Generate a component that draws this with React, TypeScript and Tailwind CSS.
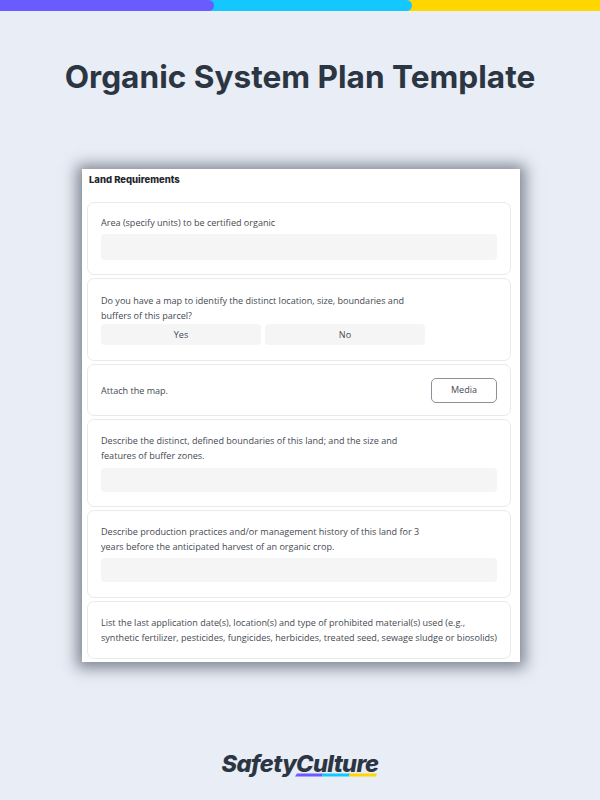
const Label = ({ children }: { children: React.ReactNode }) => (
  <p className="text-[9.05px] leading-[15px] text-[#454a52]">{children}</p>
);

const Field = ({ className }: { className: string }) => (
  <div className={`rounded-[4px] bg-[#f5f5f6] ${className}`} />
);

const Card = ({ className, children }: { className: string; children: React.ReactNode }) => (
  <section className={`rounded-[7px] border border-[#e9eaec] bg-white pl-[13px] pr-[13px] ${className}`}>{children}</section>
);

export default function App() {
  return (
    <div className="flex h-[800px] w-[600px] flex-col items-center overflow-hidden bg-[#e8edf6] font-['Open_Sans',sans-serif]">
      <div className="flex h-[11px] w-full bg-[#ffd600]">
        <div className="flex w-[412px] justify-start rounded-r-full bg-[#14c8ff]">
          <div className="h-full w-[214px] rounded-r-full bg-[#6a5bff]" />
        </div>
      </div>

      <h1 className="mt-[47px] h-[38px] font-['Inter',sans-serif] text-[31.6px] leading-[38px] font-bold whitespace-nowrap text-[#2b3642]">
        Organic System Plan Template
      </h1>

      <main className="mt-[73px] ml-[2px] h-[493px] w-[438px] bg-white pr-[9px] pl-[5px] shadow-[0_1px_14px_5px_rgba(60,66,80,0.62)]">
        <h2 className="pt-[5px] pl-[2px] font-['Inter',sans-serif] text-[9.5px] leading-[12px] font-extrabold text-[#23262b]">Land Requirements</h2>

        <div className="mt-[16px] flex flex-col gap-[3px]">
          <Card className="h-[73px] pt-[12px]">
            <Label>Area (specify units) to be certified organic</Label>
            <Field className="mt-[4px] h-[26px]" />
          </Card>

          <Card className="h-[83px] pt-[14px]">
            <Label>
              Do you have a map to identify the distinct location, size, boundaries and
              <br />
              buffers of this parcel?
            </Label>
            <div className="mt-[1px] flex w-[324px] gap-[4px]">
              <div className="flex h-[21px] flex-1 items-center justify-center rounded-[4px] bg-[#f5f5f6] text-[9.05px] text-[#454a52]">Yes</div>
              <div className="flex h-[21px] flex-1 items-center justify-center rounded-[4px] bg-[#f5f5f6] text-[9.05px] text-[#454a52]">No</div>
            </div>
          </Card>

          <Card className="flex h-[52px] items-center justify-between">
            <Label>Attach the map.</Label>
            <div className="flex h-[25px] w-[66px] items-center justify-center rounded-[5px] border border-[#8b9099] text-[9.05px] text-[#454a52]">Media</div>
          </Card>

          <Card className="h-[88px] pt-[13px]">
            <Label>
              Describe the distinct, defined boundaries of this land; and the size and
              <br />
              features of buffer zones.
            </Label>
            <Field className="mt-[5px] h-[24px]" />
          </Card>

          <Card className="h-[88px] pt-[13px]">
            <Label>
              Describe production practices and/or management history of this land for 3
              <br />
              years before the anticipated harvest of an organic crop.
            </Label>
            <Field className="mt-[4px] h-[24px]" />
          </Card>

          <Card className="h-[58px] pt-[13px]">
            <Label>
              List the last application date(s), location(s) and type of prohibited material(s) used (e.g.,
              <br />
              synthetic fertilizer, pesticides, fungicides, herbicides, treated seed, sewage sludge or biosolids)
            </Label>
          </Card>
        </div>
      </main>

      <div className="mt-[89px] flex flex-col items-center">
        <div className="font-['Inter',sans-serif] text-[23.5px] leading-[26px] font-extrabold tracking-[-0.6px] text-[#2b3642] italic">SafetyCulture</div>
        <svg className="mt-[-4px] ml-[72px]" width="82" height="4" viewBox="0 0 82 4">
          <path d="M2 0.5H28L27 3.5H0Z" fill="#6a5bff" />
          <path d="M28 0.5H55L54 3.5H27Z" fill="#14c8ff" />
          <path d="M55 0.5H82L81 3.5H54Z" fill="#ffd600" />
        </svg>
      </div>
    </div>
  );
}
